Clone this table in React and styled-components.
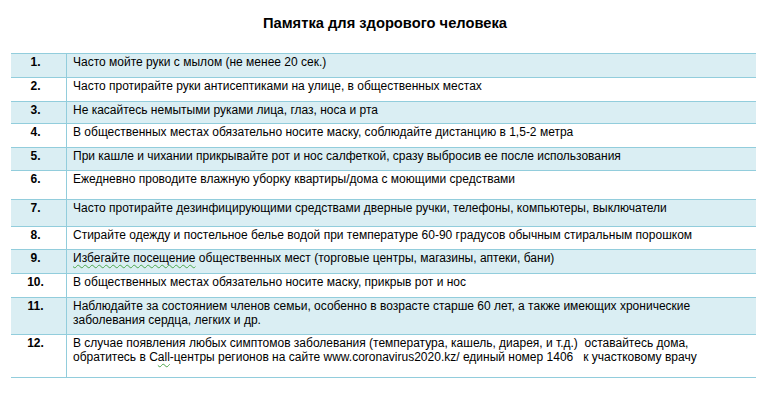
import React from 'react'
import styled, { createGlobalStyle } from 'styled-components'

const Global = createGlobalStyle`
    html, body {
        margin: 0;
        padding: 0;
        background: #fff;
    }
    body {
        font-family: "Liberation Sans", Arial, sans-serif;
        color: #000;
    }
`

const Page = styled.div`
    width: 770px;
    height: 396px;
    overflow: hidden;
`

const Title = styled.h1`
    margin: 0;
    height: 53px;
    box-sizing: border-box;
    padding-top: 14px;
    text-align: center;
    font-size: 14.7px;
    font-weight: bold;
    line-height: 18px;
`

const Table = styled.div`
    margin-left: 11px;
    width: 745px;
    border-top: 1px solid #92cddc;
`

const Row = styled.div`
    display: grid;
    grid-template-columns: 56px 1fr;
    height: ${p => p.$h}px;
    box-sizing: border-box;
    border-bottom: 1px solid #92cddc;
    background: ${p => (p.$shaded ? '#daeef3' : '#fff')};
`

const Num = styled.div`
    border-right: 1px solid #92cddc;
    padding: 1px 6px 0 0;
    text-align: center;
    font-size: 12px;
    font-weight: bold;
    line-height: 14px;
`

const Text = styled.div`
    padding: 1px 33px 0 6px;
    font-size: 12px;
    line-height: 14px;
`

const Squiggle = styled.span`
    text-decoration: underline wavy #4ca64c;
    text-decoration-thickness: 1px;
    text-underline-offset: 2px;
`

const rows = [
    { h: 24, text: 'Часто мойте руки с мылом (не менее 20 сек.)' },
    { h: 24, text: 'Часто протирайте руки антисептиками на улице, в общественных местах' },
    { h: 22, text: 'Не касайтесь немытыми руками лица, глаз, носа и рта' },
    { h: 24, text: 'В общественных местах обязательно носите маску, соблюдайте дистанцию в 1,5-2 метра' },
    { h: 23, text: 'При кашле и чихании прикрывайте рот и нос салфеткой, сразу выбросив ее после использования' },
    { h: 29, text: 'Ежедневно проводите влажную уборку квартиры/дома с моющими средствами' },
    { h: 27, text: 'Часто протирайте дезинфицирующими средствами дверные ручки, телефоны, компьютеры, выключатели' },
    { h: 23, text: 'Стирайте одежду и постельное белье водой при температуре 60-90 градусов обычным стиральным порошком' },
    { h: 24, text: <><Squiggle>Избегайте посещение</Squiggle> общественных мест (торговые центры, магазины, аптеки, бани)</> },
    { h: 24, text: 'В общественных местах обязательно носите маску, прикрыв рот и нос' },
    { h: 37, text: 'Наблюдайте за состоянием членов семьи, особенно в возрасте старше 60 лет, а также имеющих хронические заболевания сердца, легких и др.' },
    {
        h: 43,
        text: <>В случае появления любых симптомов заболевания (температура, кашель, диарея, и т.д.)&nbsp; оставайтесь дома, обратитесь в C<Squiggle>all</Squiggle>-центры регионов на сайте www.coronavirus2020.kz/ единый номер 1406 &nbsp;&nbsp;к участковому врачу</>,
    },
]

function App() {
    return (
        <Page>
            <Global />
            <Title>Памятка для здорового человека</Title>
            <Table>
                {rows.map((r, i) => (
                    <Row key={i} $h={r.h} $shaded={i % 2 === 0}>
                        <Num>{i + 1}.</Num>
                        <Text>{r.text}</Text>
                    </Row>
                ))}
            </Table>
        </Page>
    )
}

export default App
